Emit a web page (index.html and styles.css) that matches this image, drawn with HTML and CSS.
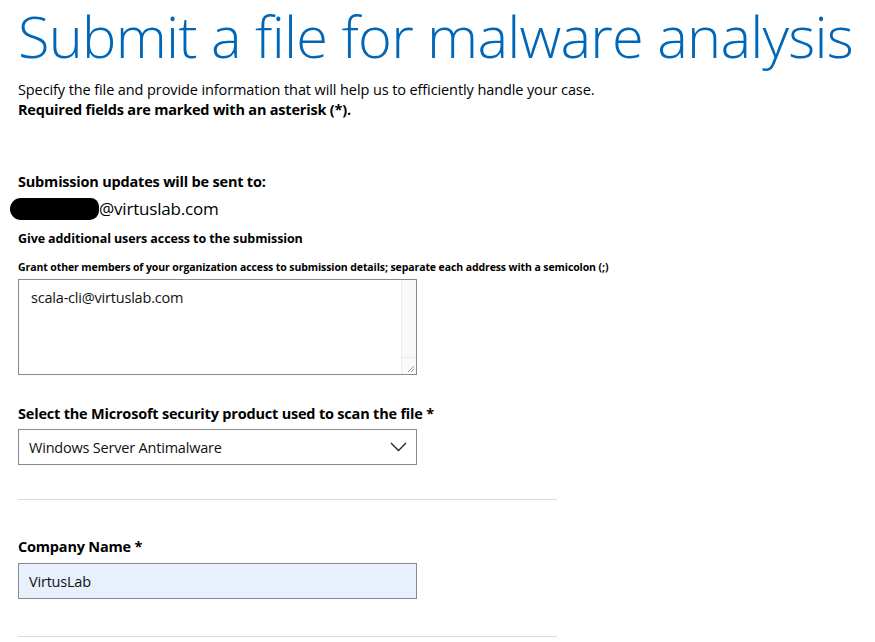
FILE: index.html
```html
<!DOCTYPE html>
<html lang="en">
<head>
<meta charset="utf-8">
<title>Submit a file for malware analysis</title>
<link rel="stylesheet" href="styles.css">
</head>
<body>
<main class="page">
  <h1 class="title">Submit a file for malware analysis</h1>
  <p class="intro">Specify the file and provide information that will help us to efficiently handle your case.<br><strong>Required fields are marked with an asterisk (*).</strong></p>

  <section class="updates">
    <h2 class="label">Submission updates will be sent to:</h2>
    <div class="email"><span class="redact"></span><span>@virtuslab.com</span></div>
    <h3 class="sublabel">Give additional users access to the submission</h3>
    <p class="hint">Grant other members of your organization access to submission details; separate each address with a semicolon (;)</p>
    <div class="textarea-box">
      <textarea class="textarea" aria-label="Additional users">scala-cli@virtuslab.com</textarea>
      <div class="track">
        <div class="track-fill"></div>
        <div class="corner">
          <svg width="8" height="8" viewBox="0 0 8 8"><path d="M7 1 L1 7 M7 4 L4 7" stroke="#9a9a9a" stroke-width="1" fill="none"/></svg>
        </div>
      </div>
    </div>
  </section>

  <section class="product">
    <h2 class="label">Select the Microsoft security product used to scan the file *</h2>
    <div class="select-box">
      <span>Windows Server Antimalware</span>
      <svg class="chevron" width="17" height="10" viewBox="0 0 17 10"><path d="M1 1 L8.5 8.5 L16 1" stroke="#222" stroke-width="1.3" fill="none"/></svg>
    </div>
  </section>

  <hr class="divider">

  <section class="company">
    <h2 class="label">Company Name *</h2>
    <input class="input" type="text" value="VirtusLab" aria-label="Company Name">
  </section>

  <hr class="divider">
</main>
</body>
</html>
```

FILE: styles.css
```css
html, body {
  margin: 0;
  padding: 0;
  background: #fff;
}

body {
  font-family: "Open Sans", "Noto Sans", sans-serif;
  color: #000;
}

.page {
  padding: 0 18px;
}

.title {
  margin: -4px 0 0;
  font-weight: 300;
  font-size: 57.8px;
  line-height: 79px;
  color: #0067b8;
  letter-spacing: -0.78px;
  white-space: nowrap;
}

.intro {
  margin: 5px 0 0;
  font-size: 14.5px;
  line-height: 20px;
  letter-spacing: -0.1px;
}

.intro strong {
  font-weight: 700;
  letter-spacing: -0.2px;
}

.updates {
  margin-top: 52px;
}

.label {
  margin: 0;
  font-size: 14.5px;
  font-weight: 700;
  line-height: 20px;
  letter-spacing: -0.2px;
}

.email {
  display: flex;
  align-items: center;
  margin-top: 6px;
  font-size: 17px;
  line-height: 22px;
  letter-spacing: -0.2px;
}

.redact {
  display: inline-block;
  width: 89px;
  height: 22px;
  margin-left: -8px;
  background: #000;
  border-radius: 12px 9px 10px 12px;
}

.sublabel {
  margin: 10px 0 0;
  font-size: 12.5px;
  font-weight: 700;
  line-height: 18px;
  letter-spacing: -0.1px;
}

.hint {
  margin: 11px 0 0;
  font-size: 10.5px;
  font-weight: 700;
  line-height: 16px;
  letter-spacing: -0.1px;
  white-space: nowrap;
}

.textarea-box {
  display: flex;
  width: 399px;
  height: 96px;
  margin-top: 4px;
  border: 1px solid #8a8a8a;
  box-sizing: border-box;
}

.textarea {
  flex: 1;
  border: none;
  outline: none;
  resize: none;
  padding: 8px 12px;
  margin: 0;
  font-family: inherit;
  font-size: 14.5px;
  line-height: 20px;
  color: #111;
  letter-spacing: -0.2px;
}

.track {
  display: flex;
  flex-direction: column;
  width: 14px;
  background: #f9f9f9;
  border-left: 1px solid #ececec;
}

.track-fill {
  flex: 1;
}

.corner {
  height: 15px;
  display: flex;
  align-items: flex-end;
  justify-content: flex-end;
  border-top: 1px solid #ececec;
  background: #fafafa;
  padding: 0 1px 1px 0;
}

.product {
  margin-top: 29px;
}

.select-box {
  display: flex;
  align-items: center;
  justify-content: space-between;
  width: 399px;
  height: 36px;
  margin-top: 5px;
  padding: 0 9px 0 10px;
  box-sizing: border-box;
  border: 1px solid #8a8a8a;
  font-size: 14.5px;
  letter-spacing: -0.2px;
  color: #111;
}

.chevron {
  display: block;
}

.divider {
  width: 539px;
  margin: 34px 0 0;
  border: none;
  border-top: 1px solid #dcdcdc;
  height: 0;
}

.company {
  margin-top: 37px;
}

.input {
  display: block;
  width: 399px;
  height: 36px;
  margin: 6px 0 0;
  padding: 0 10px;
  box-sizing: border-box;
  border: 1px solid #8a8a8a;
  background: #e8f0fe;
  font-family: inherit;
  font-size: 14.5px;
  letter-spacing: -0.2px;
  color: #111;
  outline: none;
}

.company + .divider {
  margin-top: 37px;
}
```
